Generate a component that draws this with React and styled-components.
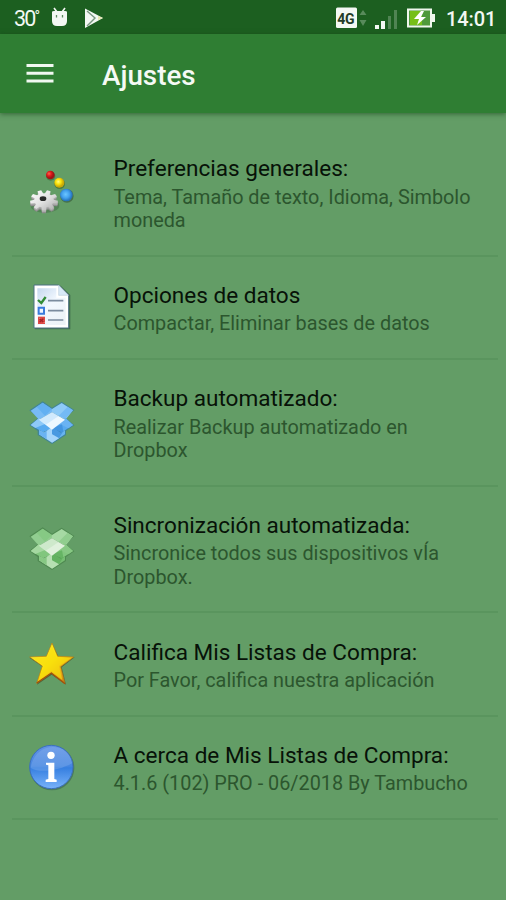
import React from "react";
import styled, { createGlobalStyle } from "styled-components";

const GlobalStyle = createGlobalStyle`
  body { margin: 0; background: #639d66; }
  * { box-sizing: border-box; }
`;

const Screen = styled.div`
  display: flex;
  flex-direction: column;
  width: 506px;
  height: 900px;
  overflow: hidden;
  background: #639d66;
  font-family: Roboto, sans-serif;
`;

const StatusBar = styled.div`
  display: flex;
  flex: none;
  justify-content: space-between;
  height: 34px;
  background: #1c5f20;
  color: #f3f8f3;
`;

const StatusGroup = styled.div`
  display: flex;
  align-items: center;
  height: 36px;
`;

const Temperature = styled.span`
  display: flex;
  width: 37px;
  padding: 2px 0 0 14px;
  margin-right: 13px;
  font-size: 21.5px;
  line-height: 36px;
  letter-spacing: -1.8px;
  white-space: nowrap;
`;

const Degree = styled.span`
  font-size: 15px;
  line-height: 30px;
`;

const Clock = styled.span`
  width: 60px;
  padding-top: 1px;
  font-size: 20px;
  font-weight: 500;
  letter-spacing: -0.1px;
  white-space: nowrap;
`;

const StatusIcon = styled.svg`
  display: block;
  flex: none;
  height: 36px;
`;

const Toolbar = styled.header`
  display: flex;
  flex: none;
  align-items: center;
  height: 79px;
  padding: 3px 0 0 26px;
  background: #2f7e33;
  box-shadow: 0 1px 5px rgba(20, 60, 22, 0.6);
  z-index: 1;
`;

const MenuButton = styled.button`
  display: block;
  width: 28px;
  height: 28px;
  padding: 0;
  margin: -5px 48px 0 0;
  border: 0;
  background: none;
`;

const Heading = styled.h1`
  margin: 0;
  padding-top: 2px;
  color: #f5faf5;
  font-size: 27.8px;
  font-weight: 500;
  line-height: 36px;
`;

const List = styled.ul`
  margin: 0;
  padding: 17px 8px 0 12px;
  list-style: none;
`;

const Row = styled.li`
  display: grid;
  grid-template-columns: 64px 1fr;
  column-gap: 29.5px;
  height: ${(p) => (p.$tall ? 126.6 : 103.4)}px;
  padding-left: 8px;
  border-bottom: 2px solid #5a955e;
`;

const RowIcon = styled.svg`
  width: 64px;
  height: 64px;
  align-self: center;
  margin-top: 1px;
`;

const RowText = styled.div`
  padding-top: 25.4px;
  white-space: nowrap;
`;

const Title = styled.div`
  color: #071208;
  font-size: 22.55px;
  line-height: 28px;
`;

const Summary = styled.div`
  color: #2c562e;
  font-size: 19.83px;
  line-height: 23.4px;
  margin-top: ${(p) => (p.$first ? 2.2 : 0)}px;
`;

const GEAR_CENTER = { x: 72, y: 118 };

/* Outline of a nine-toothed gear, flattened and slightly tilted. */
const gearOutline = (dy) => {
  const points = [];
  const teeth = 9;
  for (let i = 0; i < teeth; i += 1) {
    [[-0.36, 0.7], [-0.2, 1], [0.2, 1], [0.36, 0.7]].forEach(([offset, radius]) => {
      const angle = ((i + offset) / teeth) * Math.PI * 2 + 0.18;
      const x = GEAR_CENTER.x + Math.cos(angle) * 42 * radius;
      const y = GEAR_CENTER.y + dy + Math.sin(angle) * 31 * radius;
      points.push(`${x.toFixed(1)},${y.toFixed(1)}`);
    });
  }
  return points.join(" ");
};

const Preferences = () => (
  <>
    <defs>
      <linearGradient id="gear" x1="0" y1="0" x2="1" y2="1">
        <stop offset="0" stopColor="#fff" />
        <stop offset=".5" stopColor="#e2e2e2" />
        <stop offset="1" stopColor="#a8a8a8" />
      </linearGradient>
      <radialGradient id="red" cx=".35" cy=".35"><stop stopColor="#ff6550" /><stop offset=".5" stopColor="#e01d1d" /><stop offset="1" stopColor="#a11414" /></radialGradient>
      <radialGradient id="yellow" cx=".4" cy=".4"><stop stopColor="#fffb80" /><stop offset=".5" stopColor="#fbe50b" /><stop offset="1" stopColor="#c9a908" /></radialGradient>
      <radialGradient id="blue" cx=".45" cy=".45"><stop stopColor="#6cc6ff" /><stop offset=".6" stopColor="#42a0ee" /><stop offset="1" stopColor="#2876bd" /></radialGradient>
    </defs>
    <ellipse cx="75" cy="134" rx="43" ry="22" fill="#3e6741" opacity=".45" />
    <polygon points={gearOutline(8)} fill="#8f8f8f" />
    <polygon points={gearOutline(4)} fill="#adadad" />
    <polygon points={gearOutline(0)} fill="url(#gear)" />
    <ellipse cx="69" cy="113" rx="10" ry="7" fill="#292929" />
    <circle cx="92" cy="45" r="14" fill="#487f4b" />
    <circle cx="91" cy="42" r="13" fill="url(#red)" />
    <circle cx="119" cy="68" r="16" fill="#4b7a3e" />
    <circle cx="118" cy="65" r="15" fill="url(#yellow)" />
    <circle cx="141" cy="105" r="20" fill="#47714a" />
    <circle cx="139" cy="102" r="19" fill="url(#blue)" />
  </>
);

const Checklist = () => (
  <>
    <defs><linearGradient id="paper" x1="0" y1="0" x2=".7" y2="1"><stop stopColor="#c5d8ee" /><stop offset=".5" stopColor="#f2f8ff" /><stop offset="1" stopColor="#edf3f8" /></linearGradient></defs>
    <path d="M45 29H122L151 57V160H45Z" fill="#30563d" opacity=".65" />
    <path d="M42 27H116L146 57V156H42Z" fill="#fff" stroke="#4c7182" strokeWidth="3" />
    <path d="M52 37H109V65H137V147H52Z" fill="url(#paper)" />
    <path d="M116 28L145 58H116Z" fill="#d8e9f8" stroke="#bfd0de" strokeWidth="2" />
    <path d="M84 74h46M84 104h46M84 132h46" stroke="#7b8b9e" strokeWidth="5" />
    <path d="M54 72l10 9 13-18" fill="none" stroke="#328c36" strokeWidth="7" />
    <path d="M56 95h16v18H56z" fill="#eef5ff" stroke="#397bdd" strokeWidth="6" />
    <path d="M54 122h21v22H54z" fill="#dc4845" />
    <path d="M59 128l11 10m0-10l-11 10" stroke="#a72025" strokeWidth="4" />
    <path d="M57 125l4 4m10 9l3 3" stroke="#f9aaa3" strokeWidth="2" />
  </>
);

const BLUE_BOX = { edge: "#337aaa", flapL: "#78bbf5", flapR: "#8ecaf7", inner: "#eef8ff", left: "#58aaf0", right: "#6ab3f3", lower: "#a5d5fb", lowerR: "#68b4f0", deep: "#398bd8" };
const GREEN_BOX = { edge: "#478149", flapL: "#91cd90", flapR: "#a6d9a3", inner: "#e0f1dd", left: "#81c67e", right: "#87c884", lower: "#b5dfb1", lowerR: "#76bd73", deep: "#58aa56" };

const OpenBox = ({ c }) => (
  <>
    <path d="M68 31L96 50 125 32 163 57 137 81 163 103 138 120V132L96 159 53 132V120L28 102 55 80 28 58Z" fill={c.edge} opacity=".7" />
    <path d="M68 35L96 54V64L57 86 32 59Z" fill={c.flapL} />
    <path d="M125 36L159 58 136 86 96 64V54Z" fill={c.flapR} />
    <path d="M68 35L96 54 75 74 50 47Z" fill={c.left} opacity=".65" />
    <path d="M143 47L159 58 136 84 116 74Z" fill={c.right} opacity=".7" />
    <path d="M57 81L96 112 69 124 32 102Z" fill={c.left} />
    <path d="M136 81L159 102 126 124 96 112Z" fill={c.left} />
    <path d="M57 81L77 98 46 111 32 102Z" fill={c.lower} opacity=".7" />
    <path d="M136 81L159 102 145 112 116 97Z" fill={c.right} />
    <path d="M57 118L72 125 96 108V155L57 130Z" fill={c.lower} />
    <path d="M57 118L72 125 80 119V145L57 130Z" fill={c.right} />
    <path d="M96 108L122 125 135 118V130L96 155Z" fill={c.lowerR} />
    <path d="M96 112L126 100 130 121 117 141 96 130Z" fill={c.deep} opacity=".65" />
    <path d="M96 130L117 142 96 155Z" fill={c.lower} />
    <path d="M96 64L135 86 96 116 57 86Z" fill={c.inner} />
    <path d="M96 64L116 75 77 101 57 86Z" fill={c.lower} opacity=".4" />
  </>
);

const Star = () => (
  <>
    <defs><linearGradient id="star" x1="0" y1="0" x2="1" y2="1"><stop stopColor="#fffc50" /><stop offset=".48" stopColor="#fae40c" /><stop offset=".75" stopColor="#e5a416" /><stop offset="1" stopColor="#a84d0b" /></linearGradient></defs>
    <path d="M97 35L116 75 164 76 125 106 138 158 95 128 51 158 68 104 28 77 78 75Z" fill="#4c512d" opacity=".75" />
    <path d="M96 33L113 73 161 75 122 104 135 155 94 123 50 154 67 102 29 75 79 73Z" fill="url(#star)" stroke="#bd7e12" strokeWidth="2" />
    <path d="M95 39L109 76 153 78 117 102 127 144 94 117 56 145 73 101 35 77 82 76Z" fill="#f8dd0d" opacity=".65" />
    <path d="M50 153L94 123 135 155" fill="none" stroke="#a2510c" strokeWidth="4" />
  </>
);

const Info = () => (
  <>
    <defs><linearGradient id="info" x1="0" y1="0" x2="0" y2="1"><stop stopColor="#6393e4" /><stop offset=".48" stopColor="#4586e1" /><stop offset=".52" stopColor="#367fe0" /><stop offset="1" stopColor="#79b3fa" /></linearGradient></defs>
    <circle cx="96" cy="96" r="67" fill="#3c6455" opacity=".6" />
    <circle cx="94" cy="93" r="65" fill="url(#info)" stroke="#3c71bd" strokeWidth="3" />
    <path d="M32 96C59 113 120 103 156 82C148 16 44 13 32 96Z" fill="#a6c7f4" opacity=".25" />
    <circle cx="93" cy="58" r="11" fill="#fff" />
    <path d="M78 80H103V129L110 131V138H77V131L85 129V88L78 86Z" fill="#fff" />
  </>
);

const ITEMS = [
  { icon: <Preferences />, title: "Preferencias generales:", lines: ["Tema, Tamaño de texto, Idioma, Simbolo", "moneda"] },
  { icon: <Checklist />, title: "Opciones de datos", lines: ["Compactar, Eliminar bases de datos"] },
  { icon: <OpenBox c={BLUE_BOX} />, title: "Backup automatizado:", lines: ["Realizar Backup automatizado en", "Dropbox"] },
  { icon: <OpenBox c={GREEN_BOX} />, title: "Sincronización automatizada:", lines: ["Sincronice todos sus dispositivos vÍa", "Dropbox."] },
  { icon: <Star />, title: "Califica Mis Listas de Compra:", lines: ["Por Favor, califica nuestra aplicación"] },
  { icon: <Info />, title: "A cerca de Mis Listas de Compra:", lines: ["4.1.6 (102) PRO - 06/2018 By Tambucho"] },
];

export default function App() {
  return (
    <Screen>
      <GlobalStyle />
      <StatusBar>
        <StatusGroup>
          <Temperature>30<Degree>°</Degree></Temperature>
          <StatusIcon width="60" viewBox="0 0 60 36" fill="#f3f8f3">
            <path d="M2 12Q2 11 4 11H15Q17 11 17 12V21Q17 26 12 26H7Q2 26 2 21Z" />
            <path d="M4 8l3 4m8-4l-3 4" stroke="#f3f8f3" strokeWidth="1.6" />
            <path d="M6.5 15v2.5m6-2.5v2.5" stroke="#5d8b60" strokeWidth="1.3" />
            <path d="M35 8.5L53 18 35 28Z" />
            <path d="M37 11L45 18 37 26" fill="none" stroke="#799780" strokeWidth="1.4" />
            <path d="M48 16l5 2-5 2z" fill="#e6e8b1" />
          </StatusIcon>
        </StatusGroup>
        <StatusGroup>
          <StatusIcon width="112" viewBox="334 0 112 36">
            <rect x="336" y="7.5" width="21" height="20.5" rx="1.5" fill="#f3f8f3" />
            <text x="337.2" y="23.5" fontSize="14" fontWeight="700" letterSpacing="-.2" fontFamily="Roboto, sans-serif" fill="#243c26">4G</text>
            <path d="M359.5 15l3.5-5 3.5 5zM359.5 20h7L363 26z" fill="#588b5b" />
            <path d="M375 25h4v4h-4zM381 21h4v8h-4z" fill="#f3f8f3" />
            <path d="M388 16h3v13h-3zM394 10h3v19h-3z" fill="#508453" />
            <rect x="408" y="9.5" width="23" height="17" fill="#4f993b" stroke="#eff7ed" strokeWidth="2" />
            <path d="M410 11h12v14h-12z" fill="#76bf19" />
            <path d="M432 14h3v8h-3z" fill="#eff7ed" />
            <path d="M421 11L414 19H419L417 25 426 17H421L424 11Z" fill="#fff" />
          </StatusIcon>
          <Clock>14:01</Clock>
        </StatusGroup>
      </StatusBar>
      <Toolbar>
        <MenuButton aria-label="Menú">
          <svg width="28" height="28" viewBox="0 0 28 28"><path d="M.5 6.5h27M.5 14.2h27M.5 22h27" stroke="#f1f8f1" strokeWidth="3" /></svg>
        </MenuButton>
        <Heading>Ajustes</Heading>
      </Toolbar>
      <List>
        {ITEMS.map((item) => (
          <Row key={item.title} $tall={item.lines.length > 1}>
            <RowIcon viewBox="0 0 192 192">{item.icon}</RowIcon>
            <RowText>
              <Title>{item.title}</Title>
              {item.lines.map((line, i) => (
                <Summary key={line} $first={i === 0}>{line}</Summary>
              ))}
            </RowText>
          </Row>
        ))}
      </List>
    </Screen>
  );
}
